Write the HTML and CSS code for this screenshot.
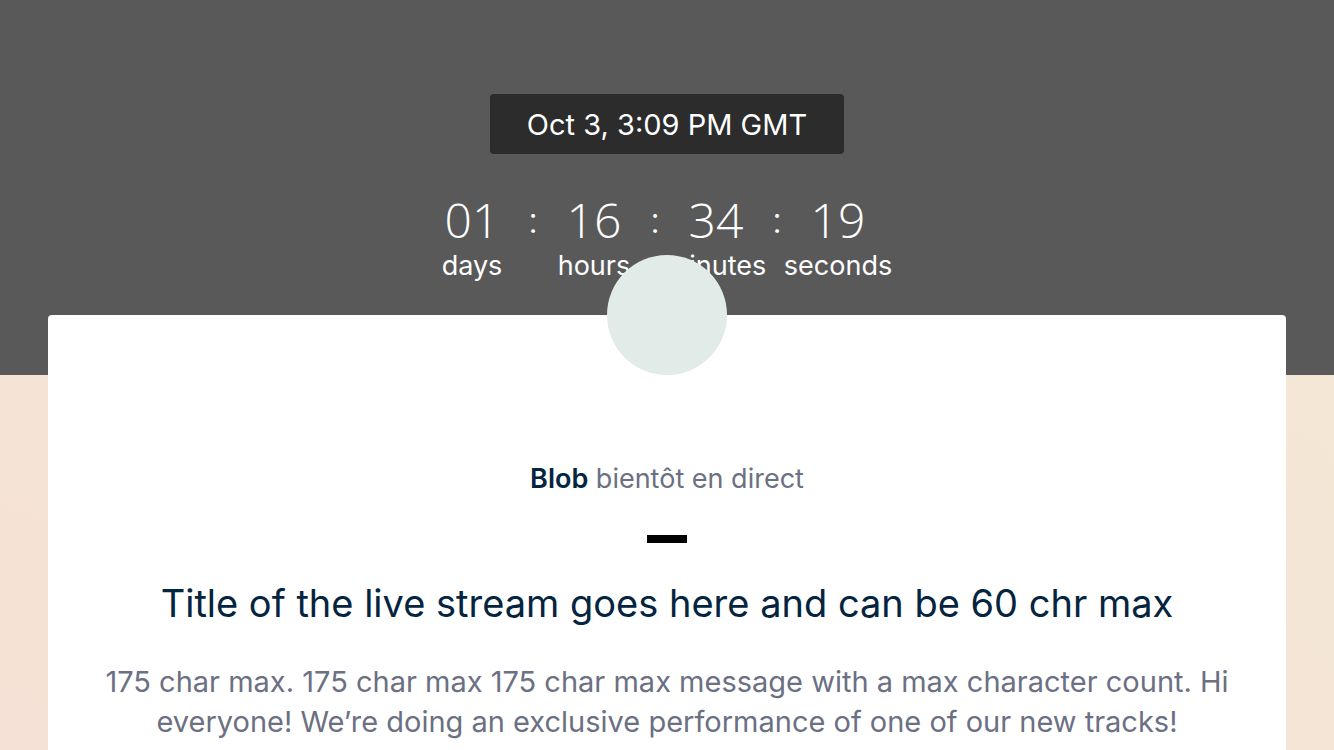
FILE: index.html
```html
<!DOCTYPE html>
<html lang="en">
<head>
<meta charset="utf-8">
<meta name="viewport" content="width=device-width, initial-scale=1">
<title>Live stream</title>
<link rel="stylesheet" href="styles.css">
</head>
<body>
<main class="page">
  <header class="hero">
    <time class="date">Oct 3, 3:09 PM GMT</time>
    <div class="countdown">
      <div class="unit"><span class="value">01</span><span class="label">days</span></div>
      <span class="colon">:</span>
      <div class="unit"><span class="value">16</span><span class="label">hours</span></div>
      <span class="colon">:</span>
      <div class="unit"><span class="value">34</span><span class="label">minutes</span></div>
      <span class="colon">:</span>
      <div class="unit"><span class="value">19</span><span class="label">seconds</span></div>
    </div>
  </header>
  <section class="card">
    <div class="avatar"></div>
    <p class="status"><strong>Blob</strong> bientôt en direct</p>
    <div class="divider"></div>
    <h1 class="title">Title of the live stream goes here and can be 60 chr max</h1>
    <p class="message">175 char max. 175 char max 175 char max message with a max character count. Hi everyone! We’re doing an exclusive performance of one of our new tracks!</p>
  </section>
</main>
</body>
</html>
```
FILE: styles.css
```css
* { box-sizing: border-box; }
body {
  margin: 0;
  font-family: Inter, "Liberation Sans", sans-serif;
  overflow: hidden;
}
.page {
  min-height: 100vh;
  background: linear-gradient(to top right, #f5e1d5, #f3e9d6);
}
.hero {
  display: flex;
  flex-direction: column;
  align-items: center;
  height: 375px;
  padding-top: 94px;
  background: #595959;
  color: #fff;
}
.date {
  padding: 1px 37px 0;
  border-radius: 4px;
  background: #2c2c2c;
  font-size: 29px;
  line-height: 59px;
}
.countdown {
  display: grid;
  grid-template-columns: 84px 38px 84px 38px 84px 38px 84px;
  margin-top: 36px;
  padding-right: 24px;
}
.unit {
  display: flex;
  flex-direction: column;
  align-items: center;
}
.value {
  font-family: "Open Sans", Inter, sans-serif;
  font-size: 48px;
  font-weight: 300;
  line-height: 60px;
}
.label {
  font-size: 27px;
  line-height: 32px;
}
.colon {
  font-size: 36px;
  font-weight: 300;
  line-height: 60px;
  text-align: center;
}
.card {
  position: relative;
  min-height: 435px;
  margin: -60px 48px 0;
  padding: 144px 48px 0;
  border-radius: 4px 4px 0 0;
  background: #fff;
  color: #6b7082;
  text-align: center;
}
.avatar {
  position: absolute;
  top: -60px;
  left: calc(50% - 60px);
  width: 120px;
  height: 120px;
  border-radius: 50%;
  background: #e1ebe7;
}
.status {
  margin: 0;
  font-size: 27px;
  line-height: 40px;
}
.status strong {
  color: #042440;
  font-weight: 600;
}
.divider {
  width: 40px;
  height: 8px;
  margin: 36px auto;
  background: #000;
}
.title {
  margin: 0;
  color: #042440;
  font-size: 38px;
  font-weight: 400;
  line-height: 48px;
}
.message {
  margin: 35px 0 0;
  font-size: 29px;
  line-height: 40px;
}
```
